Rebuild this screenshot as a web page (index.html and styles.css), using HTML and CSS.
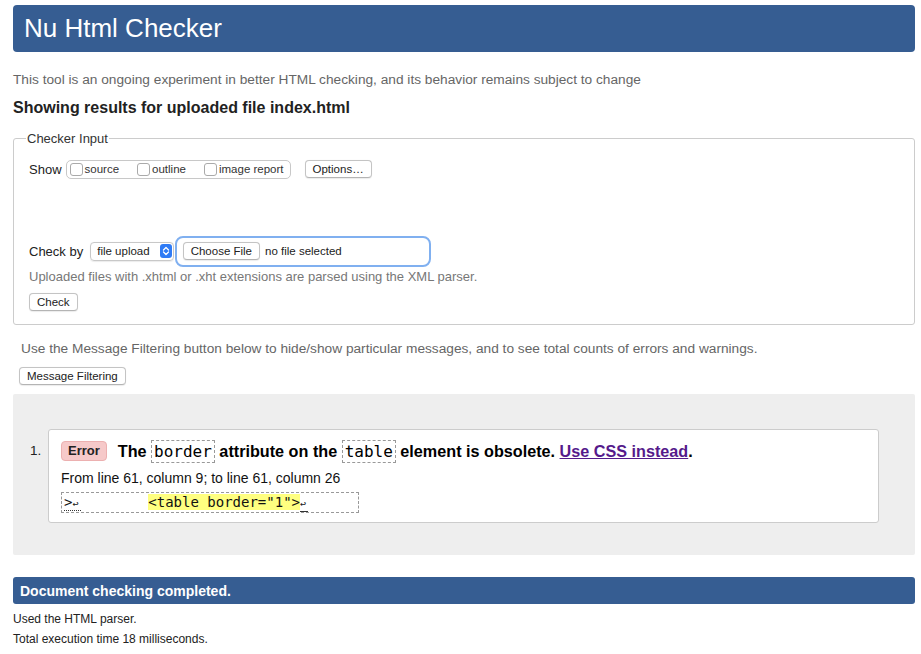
FILE: index.html
```html
<!DOCTYPE html>
<html>
<head>
<meta charset="utf-8">
<title>Nu Html Checker</title>
<link rel="stylesheet" href="styles.css">
</head>
<body>
<h1 class="title">Nu Html Checker</h1>
<p class="intro">This tool is an ongoing experiment in better HTML checking, and its behavior remains subject to change</p>
<h2 class="results">Showing results for uploaded file index.html</h2>
<fieldset class="input">
  <legend>Checker Input</legend>
  <div class="row show-row">
    <span class="lbl">Show</span>
    <span class="group">
      <label class="opt"><span class="cb"></span>source</label>
      <label class="opt"><span class="cb"></span>outline</label>
      <label class="opt"><span class="cb"></span>image report</label>
    </span>
    <span class="btn">Options…</span>
  </div>
  <div class="row check-row">
    <span class="lbl">Check by</span>
    <span class="select">file upload<span class="arrows"><svg width="8" height="10" viewBox="0 0 8 10"><path d="M1.5 4 L4 1.5 L6.5 4 M1.5 6 L4 8.5 L6.5 6" fill="none" stroke="#fff" stroke-width="1.3" stroke-linecap="round" stroke-linejoin="round"/></svg></span></span>
    <span class="file"><span class="btn">Choose File</span><span class="nofile">no file selected</span></span>
  </div>
  <p class="note">Uploaded files with .xhtml or .xht extensions are parsed using the XML parser.</p>
  <span class="btn">Check</span>
</fieldset>
<p class="filter-note">Use the Message Filtering button below to hide/show particular messages, and to see total counts of errors and warnings.</p>
<div class="filter-row"><span class="btn">Message Filtering</span></div>
<div class="messages">
  <ol class="list">
    <li class="msg">
      <p class="msg-line"><span class="badge">Error</span> <span class="msg-text">The <code>border</code> attribute on the <code>table</code> element is obsolete. <a class="link" href="#">Use CSS instead</a>.</span></p>
      <p class="loc">From line 61, column 9; to line 61, column 26</p>
      <p class="extract"><span class="lf">&gt;<span class="ret">↩</span></span>        <b class="hl">&lt;table border="1"&gt;</b><span class="ret ret2">↩</span></p>
    </li>
  </ol>
</div>
<h2 class="done">Document checking completed.</h2>
<p class="stat">Used the HTML parser.</p>
<p class="stat">Total execution time 18 milliseconds.</p>
</body>
</html>
```
FILE: styles.css
```css
html, body {
  margin: 0;
  background: #fff;
}
body {
  padding: 5px 6px 0 13px;
  font-family: "Liberation Sans", Arial, sans-serif;
  color: #222;
}
.title {
  margin: 0;
  background: #365d92;
  color: #fff;
  font-weight: normal;
  font-size: 26px;
  height: 47px;
  line-height: 47px;
  padding: 0 11px;
  border-radius: 4px;
}
.intro {
  margin: 20px 0 0;
  font-size: 13.7px;
  line-height: 16px;
  color: #666;
}
.results {
  margin: 10px 0 0;
  font-size: 16px;
  line-height: 20px;
  font-weight: bold;
  color: #222;
}
.input {
  margin: 13px 0 0;
  border: 1px solid #ccc;
  border-radius: 3px;
  padding: 4px 15px 13px;
  font-size: 13px;
}
.input legend {
  padding: 0 1px;
  font-size: 13px;
  color: #333;
  margin-left: -3px;
}
.row {
  display: flex;
  align-items: center;
}
.show-row {
  height: 20px;
  margin-top: 9px;
}
.check-row {
  margin-top: 57px;
  height: 30px;
}
.lbl {
  font-size: 13px;
  color: #222;
  margin-right: 4px;
}
.group {
  display: inline-flex;
  align-items: center;
  border: 1px solid #c8c8c8;
  border-radius: 5px;
  height: 17px;
  padding: 0 6px 0 3px;
  font-size: 11.5px;
  color: #333;
}
.opt {
  display: inline-flex;
  align-items: center;
  margin-right: 18px;
}
.opt:last-child {
  margin-right: 0;
}
.cb {
  width: 11px;
  height: 11px;
  border: 1px solid #aaa;
  border-radius: 3px;
  background: #fff;
  margin-right: 2px;
}
.btn {
  display: inline-block;
  border: 1px solid #c4c4c4;
  border-bottom-color: #b4b4b4;
  border-radius: 4px;
  background: #fff;
  font-size: 11.5px;
  color: #222;
  line-height: 16px;
  padding: 0 7px;
  box-shadow: 0 0.5px 1px rgba(0,0,0,0.08);
}
.show-row .btn {
  margin-left: 14px;
}
.select {
  display: inline-flex;
  align-items: center;
  border: 1px solid #c8c8c8;
  border-radius: 4px;
  height: 17px;
  padding: 0 1px 0 6px;
  font-size: 11.5px;
  color: #222;
  margin-left: 3px;
  box-shadow: 0 0.5px 1px rgba(0,0,0,0.08);
}
.arrows {
  display: inline-flex;
  align-items: center;
  justify-content: center;
  width: 12px;
  height: 14px;
  background: #2f7bf5;
  border-radius: 3px;
  margin-left: 10px;
}
.file {
  display: inline-flex;
  align-items: center;
  box-sizing: border-box;
  width: 256px;
  height: 31px;
  border: 2.5px solid #80b0f0;
  border-radius: 8px;
  padding-left: 6px;
  margin-left: 1px;
  font-size: 11.5px;
}
.nofile {
  margin-left: 5px;
  color: #222;
}
.note {
  margin: 3px 0 8px;
  font-size: 13px;
  line-height: 16px;
  color: #777;
}
.filter-note {
  margin: 16px 0 0 8px;
  font-size: 13.7px;
  line-height: 16px;
  color: #666;
}
.filter-row {
  margin: 9px 0 0 6px;
}
.messages {
  margin-top: 9px;
  background: #eee;
  border-radius: 2px;
  padding: 35px 36px 32px 35px;
}
.list {
  margin: 0;
  padding: 0;
  list-style: none;
  counter-reset: item;
}
.msg {
  position: relative;
  background: #fff;
  border: 1px solid #ccc;
  border-radius: 3px;
  padding: 10px 12px 9px;
  counter-increment: item;
}
.msg::before {
  content: counter(item) ".";
  position: absolute;
  left: -19px;
  top: 13px;
  font-size: 13.5px;
  color: #222;
}
.msg-line {
  margin: 0;
  display: flex;
  align-items: center;
  color: #000;
  height: 22px;
}
.badge {
  display: inline-block;
  background: #f6c9c9;
  border: 1px solid #ecb0b0;
  border-radius: 4px;
  font-size: 13px;
  font-weight: bold;
  color: #222;
  line-height: 18px;
  padding: 0 6px;
  margin-right: 11px;
}
.msg-text {
  font-size: 16.2px;
  font-weight: bold;
  white-space: pre;
}
code {
  font-family: "DejaVu Sans Mono", monospace;
  font-weight: normal;
  font-size: 16px;
  border: 1px dashed #999;
  padding: 1px 2px;
}
.link {
  color: #551a8b;
  text-decoration: underline;
}
.loc {
  margin: 8px 0 0;
  font-size: 14px;
  line-height: 17px;
  color: #111;
}
.extract {
  margin: 5px 0 0;
  width: 292px;
  border: 1px dashed #999;
  font-family: "DejaVu Sans Mono", monospace;
  font-size: 14px;
  line-height: 19px;
  white-space: pre;
  color: #111;
  padding: 0 2px;
}
.hl {
  background: #ffff80;
  font-weight: normal;
}
.ret {
  display: inline-block;
  width: 8.43px;
  font-size: 10px;
  line-height: 14px;
}
.lf {
  border-bottom: 1px dotted #333;
}
.ret2 {
  border-bottom: 1px solid #333;
}
.done {
  margin: 22px 0 0;
  background: #365d92;
  color: #fff;
  font-size: 14px;
  font-weight: bold;
  height: 27px;
  line-height: 28px;
  padding: 0 7px;
  border-radius: 3px;
}
.stat {
  margin: 9px 0 0;
  font-size: 12px;
  line-height: 13px;
  color: #222;
}
.stat + .stat {
  margin-top: 7px;
}
```
